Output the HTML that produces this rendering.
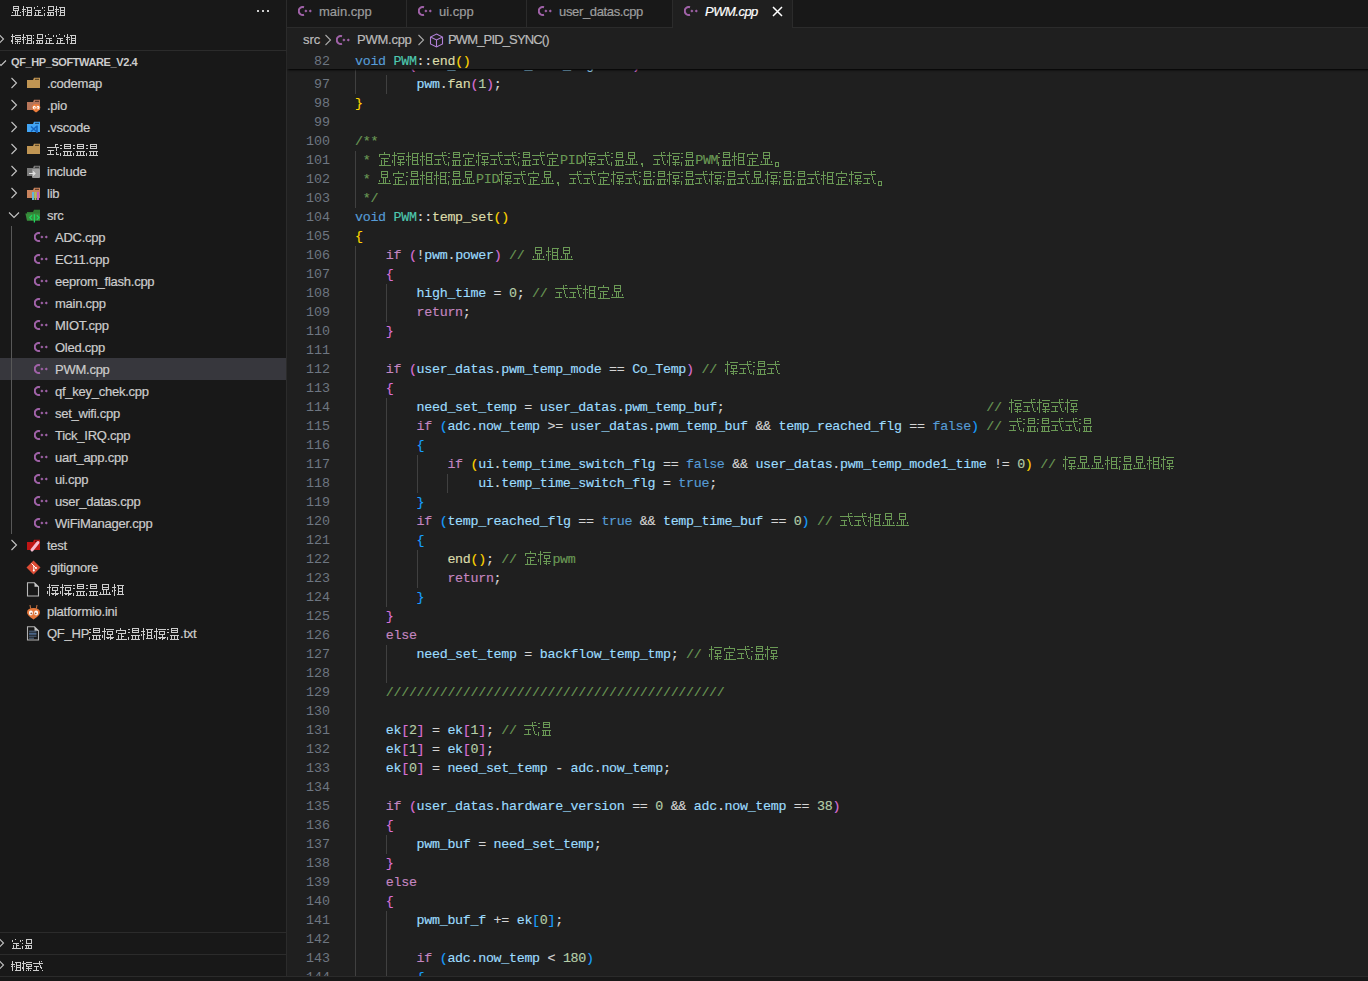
<!DOCTYPE html>
<html><head><meta charset="utf-8"><style>
html,body{margin:0;padding:0}
body{width:1368px;height:981px;overflow:hidden;background:#1f1f1f;position:relative;font-family:"Liberation Sans",sans-serif;}
.ic{position:absolute;display:block}
#side{position:absolute;left:0;top:0;width:286px;height:976px;background:#181818;overflow:hidden}
#sideborder{position:absolute;left:286px;top:0;width:1px;height:976px;background:#2b2b2b}
.stitle{position:absolute;left:11px;top:0;height:22px;line-height:22px;font-size:11px;color:#cccccc;white-space:nowrap}
.dots{position:absolute;left:257px;top:10px;width:14px;height:2px}
.dots i{position:absolute;top:0;width:2px;height:2px;background:#cccccc}
.dots i:nth-child(1){left:0}.dots i:nth-child(2){left:5px}.dots i:nth-child(3){left:10px}
.shead{position:absolute;left:11px;height:22px;line-height:22px;font-size:11px;font-weight:bold;color:#cccccc;white-space:nowrap}
.hline{position:absolute;left:0;width:286px;height:1px;background:#2b2b2b}
.tguide{position:absolute;left:11px;top:226px;width:1px;height:308px;background:#585858}
.sel{position:absolute;left:0;width:286px;height:22px;background:#37373d}
.ti{position:absolute;height:22px;line-height:22px;font-size:13px;color:#cccccc;white-space:pre;letter-spacing:-0.25px}
#tabs{position:absolute;left:287px;top:0;width:1081px;height:27px;background:#181818}
.tab{position:absolute;top:0;height:27px;background:#181818}
.tab.act{background:#1f1f1f;height:28px}
.tsep{position:absolute;top:0;width:1px;height:27px;background:#2b2b2b}
.tt{position:absolute;top:0;height:24px;line-height:24px;font-size:13px;color:#9d9d9d;white-space:pre}
.tt.tact{color:#ffffff;font-style:italic}
#tabs .ic{}
#tabline{position:absolute;left:287px;top:27px;width:1081px;height:1px;background:#2b2b2b}
#crumb{position:absolute;left:0;top:0}
.bc{position:absolute;top:29px;height:22px;line-height:22px;font-size:13px;color:#bbbbbb;white-space:pre}
#code{position:absolute;left:0;top:0;width:1368px;height:976px;overflow:hidden;clip-path:inset(50px 0 0 287px)}
.ln{position:absolute;left:287px;width:43px;text-align:right;height:19px;line-height:19px;font-family:"Liberation Mono",monospace;font-size:13.333px;color:#6e7681}
.cl{position:absolute;left:355px;height:19px;line-height:19px;font-family:"Liberation Mono",monospace;font-size:13.333px;letter-spacing:-0.3px;color:#d4d4d4;white-space:pre;-webkit-text-stroke:0.15px currentColor}
.ig{position:absolute;width:1px;background:#404040}
#sticky{position:absolute;left:287px;top:50px;width:1100px;height:19px;background:#1f1f1f;box-shadow:0 2px 2px -1px #000}
#sticky .ln{left:0}
#sticky .cl{left:68px}
#panel{position:absolute;left:0;top:976px;width:1368px;height:5px;background:#181818;border-top:1px solid #2b2b2b;box-sizing:border-box}
.k{color:#569cd6}.c{color:#c586c0}.t{color:#4ec9b0}.f{color:#dcdcaa}.v{color:#9cdcfe}.e{color:#9cdcfe}.n{color:#b5cea8}.m{color:#6a9955}.o{color:#d4d4d4}
.b1{color:#ffd700}.b2{color:#da70d6}.b3{color:#179fff}


.bold .h11{filter:drop-shadow(0.7px 0 0 #cccccc)}
.ti,.tt,.bc,.stitle{-webkit-text-stroke:0.2px currentColor}

.c14{display:inline-block;width:14px;height:19px;vertical-align:top;background-repeat:no-repeat}
.c14.g0{background:linear-gradient(currentColor,currentColor) 2px 1px/1px 14px no-repeat,linear-gradient(currentColor,currentColor) 0px 5px/5px 1px no-repeat,linear-gradient(currentColor,currentColor) 0px 8px/1px 2px no-repeat,linear-gradient(currentColor,currentColor) 4px 8px/1px 1px no-repeat,linear-gradient(currentColor,currentColor) 6px 2px/7px 1px no-repeat,linear-gradient(currentColor,currentColor) 6px 6px/6px 1px no-repeat,linear-gradient(currentColor,currentColor) 6px 9px/6px 1px no-repeat,linear-gradient(currentColor,currentColor) 6px 13px/7px 1px no-repeat,linear-gradient(currentColor,currentColor) 6px 2px/1px 12px no-repeat,linear-gradient(currentColor,currentColor) 11px 2px/1px 12px no-repeat}
.c14.g1{background:linear-gradient(currentColor,currentColor) 0px 2px/2px 1px no-repeat,linear-gradient(currentColor,currentColor) 0px 6px/2px 1px no-repeat,linear-gradient(currentColor,currentColor) 0px 11px/1px 4px no-repeat,linear-gradient(currentColor,currentColor) 5px 1px/7px 1px no-repeat,linear-gradient(currentColor,currentColor) 5px 3px/7px 1px no-repeat,linear-gradient(currentColor,currentColor) 5px 6px/7px 1px no-repeat,linear-gradient(currentColor,currentColor) 5px 1px/1px 6px no-repeat,linear-gradient(currentColor,currentColor) 11px 1px/1px 6px no-repeat,linear-gradient(currentColor,currentColor) 4px 9px/9px 1px no-repeat,linear-gradient(currentColor,currentColor) 4px 14px/9px 1px no-repeat,linear-gradient(currentColor,currentColor) 5px 9px/1px 6px no-repeat,linear-gradient(currentColor,currentColor) 7px 9px/1px 6px no-repeat,linear-gradient(currentColor,currentColor) 11px 9px/1px 6px no-repeat}
.c14.g2{background:linear-gradient(currentColor,currentColor) 2px 1px/1px 14px no-repeat,linear-gradient(currentColor,currentColor) 0px 4px/5px 1px no-repeat,linear-gradient(currentColor,currentColor) 0px 9px/1px 3px no-repeat,linear-gradient(currentColor,currentColor) 5px 2px/8px 1px no-repeat,linear-gradient(currentColor,currentColor) 6px 5px/6px 1px no-repeat,linear-gradient(currentColor,currentColor) 6px 8px/6px 1px no-repeat,linear-gradient(currentColor,currentColor) 5px 11px/8px 1px no-repeat,linear-gradient(currentColor,currentColor) 6px 5px/1px 4px no-repeat,linear-gradient(currentColor,currentColor) 11px 5px/1px 4px no-repeat,linear-gradient(currentColor,currentColor) 8px 8px/1px 7px no-repeat,linear-gradient(currentColor,currentColor) 6px 13px/2px 1px no-repeat,linear-gradient(currentColor,currentColor) 10px 13px/2px 1px no-repeat}
.c14.g3{background:linear-gradient(currentColor,currentColor) 6px 1px/1px 2px no-repeat,linear-gradient(currentColor,currentColor) 1px 3px/11px 1px no-repeat,linear-gradient(currentColor,currentColor) 1px 3px/1px 3px no-repeat,linear-gradient(currentColor,currentColor) 11px 3px/1px 3px no-repeat,linear-gradient(currentColor,currentColor) 3px 7px/8px 1px no-repeat,linear-gradient(currentColor,currentColor) 6px 7px/1px 7px no-repeat,linear-gradient(currentColor,currentColor) 6px 10px/4px 1px no-repeat,linear-gradient(currentColor,currentColor) 1px 14px/12px 1px no-repeat,linear-gradient(currentColor,currentColor) 3px 9px/1px 5px no-repeat}
.c14.g4{background:linear-gradient(currentColor,currentColor) 3px 1px/7px 1px no-repeat,linear-gradient(currentColor,currentColor) 3px 4px/7px 1px no-repeat,linear-gradient(currentColor,currentColor) 3px 7px/7px 1px no-repeat,linear-gradient(currentColor,currentColor) 3px 1px/1px 7px no-repeat,linear-gradient(currentColor,currentColor) 9px 1px/1px 7px no-repeat,linear-gradient(currentColor,currentColor) 5px 8px/1px 5px no-repeat,linear-gradient(currentColor,currentColor) 7px 8px/1px 5px no-repeat,linear-gradient(currentColor,currentColor) 0px 13px/13px 1px no-repeat,linear-gradient(currentColor,currentColor) 1px 10px/1px 2px no-repeat,linear-gradient(currentColor,currentColor) 11px 10px/1px 2px no-repeat}
.c14.g5{background:linear-gradient(currentColor,currentColor) 0px 4px/13px 1px no-repeat,linear-gradient(currentColor,currentColor) 1px 8px/6px 1px no-repeat,linear-gradient(currentColor,currentColor) 4px 8px/1px 6px no-repeat,linear-gradient(currentColor,currentColor) 0px 13px/7px 1px no-repeat,linear-gradient(currentColor,currentColor) 8px 1px/1px 5px no-repeat,linear-gradient(currentColor,currentColor) 9px 6px/1px 4px no-repeat,linear-gradient(currentColor,currentColor) 10px 10px/1px 3px no-repeat,linear-gradient(currentColor,currentColor) 11px 13px/2px 1px no-repeat,linear-gradient(currentColor,currentColor) 10px 1px/2px 1px no-repeat}
.c14.g6{background:linear-gradient(currentColor,currentColor) 2px 12px/2px 2px no-repeat,linear-gradient(currentColor,currentColor) 3px 14px/1px 2px no-repeat}
.c14.g7{background:linear-gradient(currentColor,currentColor) 1px 11px/4px 1px no-repeat,linear-gradient(currentColor,currentColor) 1px 15px/4px 1px no-repeat,linear-gradient(currentColor,currentColor) 1px 11px/1px 5px no-repeat,linear-gradient(currentColor,currentColor) 4px 11px/1px 5px no-repeat}
.s13{display:inline-block;width:13px;height:22px;vertical-align:top;background-repeat:no-repeat}
.s13.g0{background:linear-gradient(currentColor,currentColor) 2px 5px/1px 12px no-repeat,linear-gradient(currentColor,currentColor) 0px 8px/4px 1px no-repeat,linear-gradient(currentColor,currentColor) 0px 11px/1px 2px no-repeat,linear-gradient(currentColor,currentColor) 3px 11px/1px 1px no-repeat,linear-gradient(currentColor,currentColor) 5px 6px/7px 1px no-repeat,linear-gradient(currentColor,currentColor) 6px 9px/5px 1px no-repeat,linear-gradient(currentColor,currentColor) 6px 12px/5px 1px no-repeat,linear-gradient(currentColor,currentColor) 5px 15px/7px 1px no-repeat,linear-gradient(currentColor,currentColor) 6px 6px/1px 10px no-repeat,linear-gradient(currentColor,currentColor) 10px 6px/1px 10px no-repeat}
.s13.g1{background:linear-gradient(currentColor,currentColor) 0px 6px/2px 1px no-repeat,linear-gradient(currentColor,currentColor) 0px 9px/2px 1px no-repeat,linear-gradient(currentColor,currentColor) 0px 14px/1px 3px no-repeat,linear-gradient(currentColor,currentColor) 4px 5px/7px 1px no-repeat,linear-gradient(currentColor,currentColor) 4px 7px/7px 1px no-repeat,linear-gradient(currentColor,currentColor) 4px 9px/7px 1px no-repeat,linear-gradient(currentColor,currentColor) 4px 5px/1px 5px no-repeat,linear-gradient(currentColor,currentColor) 10px 5px/1px 5px no-repeat,linear-gradient(currentColor,currentColor) 3px 12px/9px 1px no-repeat,linear-gradient(currentColor,currentColor) 3px 16px/9px 1px no-repeat,linear-gradient(currentColor,currentColor) 4px 12px/1px 5px no-repeat,linear-gradient(currentColor,currentColor) 7px 12px/1px 5px no-repeat,linear-gradient(currentColor,currentColor) 10px 12px/1px 5px no-repeat}
.s13.g2{background:linear-gradient(currentColor,currentColor) 2px 5px/1px 12px no-repeat,linear-gradient(currentColor,currentColor) 0px 8px/4px 1px no-repeat,linear-gradient(currentColor,currentColor) 0px 12px/1px 3px no-repeat,linear-gradient(currentColor,currentColor) 4px 6px/8px 1px no-repeat,linear-gradient(currentColor,currentColor) 5px 8px/6px 1px no-repeat,linear-gradient(currentColor,currentColor) 5px 11px/6px 1px no-repeat,linear-gradient(currentColor,currentColor) 4px 14px/8px 1px no-repeat,linear-gradient(currentColor,currentColor) 5px 8px/1px 3px no-repeat,linear-gradient(currentColor,currentColor) 10px 8px/1px 3px no-repeat,linear-gradient(currentColor,currentColor) 8px 11px/1px 6px no-repeat,linear-gradient(currentColor,currentColor) 5px 15px/2px 1px no-repeat,linear-gradient(currentColor,currentColor) 9px 15px/2px 1px no-repeat}
.s13.g3{background:linear-gradient(currentColor,currentColor) 5px 5px/1px 2px no-repeat,linear-gradient(currentColor,currentColor) 1px 7px/10px 1px no-repeat,linear-gradient(currentColor,currentColor) 1px 7px/1px 3px no-repeat,linear-gradient(currentColor,currentColor) 10px 7px/1px 3px no-repeat,linear-gradient(currentColor,currentColor) 3px 10px/8px 1px no-repeat,linear-gradient(currentColor,currentColor) 6px 10px/1px 6px no-repeat,linear-gradient(currentColor,currentColor) 6px 13px/3px 1px no-repeat,linear-gradient(currentColor,currentColor) 1px 16px/11px 1px no-repeat,linear-gradient(currentColor,currentColor) 3px 12px/1px 4px no-repeat}
.s13.g4{background:linear-gradient(currentColor,currentColor) 3px 5px/7px 1px no-repeat,linear-gradient(currentColor,currentColor) 3px 8px/7px 1px no-repeat,linear-gradient(currentColor,currentColor) 3px 10px/7px 1px no-repeat,linear-gradient(currentColor,currentColor) 3px 5px/1px 6px no-repeat,linear-gradient(currentColor,currentColor) 9px 5px/1px 6px no-repeat,linear-gradient(currentColor,currentColor) 4px 11px/1px 4px no-repeat,linear-gradient(currentColor,currentColor) 7px 11px/1px 4px no-repeat,linear-gradient(currentColor,currentColor) 0px 15px/12px 1px no-repeat,linear-gradient(currentColor,currentColor) 1px 13px/1px 2px no-repeat,linear-gradient(currentColor,currentColor) 10px 13px/1px 2px no-repeat}
.s13.g5{background:linear-gradient(currentColor,currentColor) 0px 8px/12px 1px no-repeat,linear-gradient(currentColor,currentColor) 1px 11px/6px 1px no-repeat,linear-gradient(currentColor,currentColor) 3px 11px/1px 5px no-repeat,linear-gradient(currentColor,currentColor) 0px 15px/7px 1px no-repeat,linear-gradient(currentColor,currentColor) 8px 5px/1px 4px no-repeat,linear-gradient(currentColor,currentColor) 9px 9px/1px 3px no-repeat,linear-gradient(currentColor,currentColor) 9px 13px/1px 3px no-repeat,linear-gradient(currentColor,currentColor) 10px 15px/2px 1px no-repeat,linear-gradient(currentColor,currentColor) 9px 5px/2px 1px no-repeat}
.s13.g6{background:linear-gradient(currentColor,currentColor) 2px 14px/2px 2px no-repeat,linear-gradient(currentColor,currentColor) 3px 16px/1px 2px no-repeat}
.s13.g7{background:linear-gradient(currentColor,currentColor) 1px 14px/3px 1px no-repeat,linear-gradient(currentColor,currentColor) 1px 17px/3px 1px no-repeat,linear-gradient(currentColor,currentColor) 1px 14px/1px 4px no-repeat,linear-gradient(currentColor,currentColor) 3px 14px/1px 4px no-repeat}
.h11{display:inline-block;width:11px;height:22px;vertical-align:top;background-repeat:no-repeat}
.h11.g0{background:linear-gradient(currentColor,currentColor) 1px 6px/1px 10px no-repeat,linear-gradient(currentColor,currentColor) 0px 9px/4px 1px no-repeat,linear-gradient(currentColor,currentColor) 0px 11px/1px 1px no-repeat,linear-gradient(currentColor,currentColor) 3px 11px/1px 1px no-repeat,linear-gradient(currentColor,currentColor) 4px 7px/6px 1px no-repeat,linear-gradient(currentColor,currentColor) 5px 10px/4px 1px no-repeat,linear-gradient(currentColor,currentColor) 5px 12px/4px 1px no-repeat,linear-gradient(currentColor,currentColor) 4px 15px/6px 1px no-repeat,linear-gradient(currentColor,currentColor) 5px 7px/1px 9px no-repeat,linear-gradient(currentColor,currentColor) 9px 7px/1px 9px no-repeat}
.h11.g1{background:linear-gradient(currentColor,currentColor) 0px 7px/1px 1px no-repeat,linear-gradient(currentColor,currentColor) 0px 10px/1px 1px no-repeat,linear-gradient(currentColor,currentColor) 0px 13px/1px 3px no-repeat,linear-gradient(currentColor,currentColor) 4px 6px/6px 1px no-repeat,linear-gradient(currentColor,currentColor) 4px 10px/6px 1px no-repeat,linear-gradient(currentColor,currentColor) 4px 6px/1px 4px no-repeat,linear-gradient(currentColor,currentColor) 9px 6px/1px 4px no-repeat,linear-gradient(currentColor,currentColor) 3px 12px/7px 1px no-repeat,linear-gradient(currentColor,currentColor) 3px 15px/7px 1px no-repeat,linear-gradient(currentColor,currentColor) 4px 12px/1px 4px no-repeat,linear-gradient(currentColor,currentColor) 6px 12px/1px 4px no-repeat,linear-gradient(currentColor,currentColor) 9px 12px/1px 4px no-repeat}
.h11.g2{background:linear-gradient(currentColor,currentColor) 1px 6px/1px 10px no-repeat,linear-gradient(currentColor,currentColor) 0px 8px/4px 1px no-repeat,linear-gradient(currentColor,currentColor) 0px 12px/1px 2px no-repeat,linear-gradient(currentColor,currentColor) 4px 7px/6px 1px no-repeat,linear-gradient(currentColor,currentColor) 4px 9px/5px 1px no-repeat,linear-gradient(currentColor,currentColor) 4px 11px/5px 1px no-repeat,linear-gradient(currentColor,currentColor) 4px 13px/6px 1px no-repeat,linear-gradient(currentColor,currentColor) 4px 9px/1px 3px no-repeat,linear-gradient(currentColor,currentColor) 9px 9px/1px 3px no-repeat,linear-gradient(currentColor,currentColor) 6px 11px/1px 5px no-repeat,linear-gradient(currentColor,currentColor) 4px 15px/1px 1px no-repeat,linear-gradient(currentColor,currentColor) 8px 15px/1px 1px no-repeat}
.h11.g3{background:linear-gradient(currentColor,currentColor) 4px 6px/1px 1px no-repeat,linear-gradient(currentColor,currentColor) 1px 7px/1px 2px no-repeat,linear-gradient(currentColor,currentColor) 9px 7px/1px 2px no-repeat,linear-gradient(currentColor,currentColor) 2px 10px/6px 1px no-repeat,linear-gradient(currentColor,currentColor) 5px 10px/1px 5px no-repeat,linear-gradient(currentColor,currentColor) 5px 12px/3px 1px no-repeat,linear-gradient(currentColor,currentColor) 1px 15px/9px 1px no-repeat,linear-gradient(currentColor,currentColor) 2px 12px/1px 4px no-repeat}
.h11.g4{background:linear-gradient(currentColor,currentColor) 2px 6px/6px 1px no-repeat,linear-gradient(currentColor,currentColor) 2px 8px/6px 1px no-repeat,linear-gradient(currentColor,currentColor) 2px 10px/6px 1px no-repeat,linear-gradient(currentColor,currentColor) 2px 6px/1px 5px no-repeat,linear-gradient(currentColor,currentColor) 7px 6px/1px 5px no-repeat,linear-gradient(currentColor,currentColor) 4px 11px/1px 4px no-repeat,linear-gradient(currentColor,currentColor) 6px 11px/1px 4px no-repeat,linear-gradient(currentColor,currentColor) 0px 15px/10px 1px no-repeat,linear-gradient(currentColor,currentColor) 1px 12px/1px 1px no-repeat,linear-gradient(currentColor,currentColor) 9px 12px/1px 1px no-repeat}
.h11.g5{background:linear-gradient(currentColor,currentColor) 0px 8px/10px 1px no-repeat,linear-gradient(currentColor,currentColor) 1px 11px/5px 1px no-repeat,linear-gradient(currentColor,currentColor) 3px 11px/1px 4px no-repeat,linear-gradient(currentColor,currentColor) 0px 15px/6px 1px no-repeat,linear-gradient(currentColor,currentColor) 6px 6px/1px 4px no-repeat,linear-gradient(currentColor,currentColor) 7px 10px/1px 3px no-repeat,linear-gradient(currentColor,currentColor) 8px 12px/1px 2px no-repeat,linear-gradient(currentColor,currentColor) 9px 15px/1px 1px no-repeat,linear-gradient(currentColor,currentColor) 8px 6px/1px 1px no-repeat}
.h11.g6{background:linear-gradient(currentColor,currentColor) 1px 14px/1px 1px no-repeat,linear-gradient(currentColor,currentColor) 2px 15px/1px 1px no-repeat}
.h11.g7{background:linear-gradient(currentColor,currentColor) 1px 13px/3px 1px no-repeat,linear-gradient(currentColor,currentColor) 1px 16px/3px 1px no-repeat,linear-gradient(currentColor,currentColor) 1px 13px/1px 4px no-repeat,linear-gradient(currentColor,currentColor) 3px 13px/1px 4px no-repeat}
</style></head><body>
<div id="side">
<div class="stitle"><span class="h11 g4"></span><span class="h11 g0"></span><span class="h11 g3"></span><span class="h11 g1"></span><span class="h11 g0"></span></div>
<div class="dots"><i></i><i></i><i></i></div>
<svg class="ic" style="left:-3px;top:33px" width="8" height="12" viewBox="0 0 8 12"><path d="M1.5 1 L6.5 6 L1.5 11" fill="none" stroke="#c5c5c5" stroke-width="1.1"/></svg>
<div class="shead bold" style="top:28px"><span class="h11 g2"></span><span class="h11 g0"></span><span class="h11 g1"></span><span class="h11 g3"></span><span class="h11 g3"></span><span class="h11 g0"></span></div>
<div class="hline" style="top:50px"></div>
<svg class="ic" style="left:-5px;top:59px" width="12" height="8" viewBox="0 0 12 8"><path d="M1 1.5 L6 6.5 L11 1.5" fill="none" stroke="#c5c5c5" stroke-width="1.1"/></svg>
<div class="shead" style="top:51px;letter-spacing:-0.4px">QF_HP_SOFTWARE_V2.4</div>
<svg class="ic" style="left:10px;top:77px" width="8" height="12" viewBox="0 0 8 12"><path d="M1.5 1 L6.5 6 L1.5 11" fill="none" stroke="#c5c5c5" stroke-width="1.1"/></svg><svg class="ic" style="left:26px;top:77px" width="15" height="14" viewBox="0 0 15 14"><path d="M1 3.1 H7 L8 0.8 H14 V11.1 H1 Z" fill="#c09553"/><rect x="9" y="1.8" width="4" height="1.1" fill="#000" opacity="0.55"/></svg><div class="ti" style="left:47px;top:73px">.codemap</div><svg class="ic" style="left:10px;top:99px" width="8" height="12" viewBox="0 0 8 12"><path d="M1.5 1 L6.5 6 L1.5 11" fill="none" stroke="#c5c5c5" stroke-width="1.1"/></svg><svg class="ic" style="left:26px;top:99px" width="15" height="14" viewBox="0 0 15 14"><path d="M1 3.1 H7 L8 0.8 H14 V11.1 H1 Z" fill="#b8765a"/><rect x="9" y="1.8" width="4" height="1.1" fill="#000" opacity="0.55"/><path d="M6 8.5 Q6 5 10 5 Q14.3 5 14.3 8.5 Q14.3 11 10 13.5 Q6 11 6 8.5Z" fill="#ee7d3b"/><ellipse cx="8.3" cy="8.6" rx="1.5" ry="1.8" fill="#fff"/><ellipse cx="12" cy="8.6" rx="1.5" ry="1.8" fill="#fff"/><circle cx="8.6" cy="8.9" r="0.6" fill="#ee7d3b"/><circle cx="11.7" cy="8.9" r="0.6" fill="#ee7d3b"/></svg><div class="ti" style="left:47px;top:95px">.pio</div><svg class="ic" style="left:10px;top:121px" width="8" height="12" viewBox="0 0 8 12"><path d="M1.5 1 L6.5 6 L1.5 11" fill="none" stroke="#c5c5c5" stroke-width="1.1"/></svg><svg class="ic" style="left:26px;top:121px" width="15" height="14" viewBox="0 0 15 14"><path d="M1 3.1 H7 L8 0.8 H14 V11.1 H1 Z" fill="#42a5f5"/><rect x="9" y="1.8" width="4" height="1.1" fill="#000" opacity="0.55"/><path d="M5 5.5 L11 11 M5 10.5 L11 5 M11 4.5 V12" stroke="#1565c0" stroke-width="1.6" fill="none"/></svg><div class="ti" style="left:47px;top:117px">.vscode</div><svg class="ic" style="left:10px;top:143px" width="8" height="12" viewBox="0 0 8 12"><path d="M1.5 1 L6.5 6 L1.5 11" fill="none" stroke="#c5c5c5" stroke-width="1.1"/></svg><svg class="ic" style="left:26px;top:143px" width="15" height="14" viewBox="0 0 15 14"><path d="M1 3.1 H7 L8 0.8 H14 V11.1 H1 Z" fill="#c09553"/><rect x="9" y="1.8" width="4" height="1.1" fill="#000" opacity="0.55"/></svg><div class="ti" style="left:47px;top:139px"><span class="s13 g5"></span><span class="s13 g1"></span><span class="s13 g1"></span><span class="s13 g1"></span></div><svg class="ic" style="left:10px;top:165px" width="8" height="12" viewBox="0 0 8 12"><path d="M1.5 1 L6.5 6 L1.5 11" fill="none" stroke="#c5c5c5" stroke-width="1.1"/></svg><svg class="ic" style="left:26px;top:165px" width="15" height="14" viewBox="0 0 15 14"><path d="M1 3.1 H7 L8 0.8 H14 V11.1 H1 Z" fill="#7a7a7a"/><rect x="9" y="1.8" width="4" height="1.1" fill="#000" opacity="0.55"/><rect x="6" y="4" width="8" height="9" rx="1" fill="#9e9e9e"/><path d="M3 8.5h6M7 6.5l2 2-2 2" stroke="#e0e0e0" stroke-width="1.2" fill="none"/></svg><div class="ti" style="left:47px;top:161px">include</div><svg class="ic" style="left:10px;top:187px" width="8" height="12" viewBox="0 0 8 12"><path d="M1.5 1 L6.5 6 L1.5 11" fill="none" stroke="#c5c5c5" stroke-width="1.1"/></svg><svg class="ic" style="left:26px;top:187px" width="15" height="14" viewBox="0 0 15 14"><path d="M1 3.1 H7 L8 0.8 H14 V11.1 H1 Z" fill="#c8825c"/><rect x="9" y="1.8" width="4" height="1.1" fill="#000" opacity="0.55"/><rect x="6" y="5" width="2" height="8" fill="#62b4dc"/><rect x="8.5" y="5" width="2" height="8" fill="#a8c060"/><rect x="11" y="5" width="2" height="8" fill="#c060c8"/></svg><div class="ti" style="left:47px;top:183px">lib</div><svg class="ic" style="left:8px;top:211px" width="12" height="8" viewBox="0 0 12 8"><path d="M1 1.5 L6 6.5 L11 1.5" fill="none" stroke="#c5c5c5" stroke-width="1.1"/></svg><svg class="ic" style="left:25px;top:209px" width="16" height="15" viewBox="-1 0 16 15"><path d="M1 3.1 H7 L8 0.8 H14 V11.1 H1 Z" fill="#2e7d32"/><path d="M-0.6 4.4 H14 V11.7 H1 Z" fill="#388e3c"/><path d="M6 6.3 L3.8 8.6 L6 10.9 M10.8 6.3 L13 8.6 L10.8 10.9 M8.4 5.2 V13.6" stroke="#1ed760" stroke-width="1.3" fill="none"/></svg><div class="ti" style="left:47px;top:205px">src</div><svg class="ic" style="left:34px;top:232px" width="15" height="11" viewBox="0 0 15 11"><path d="M6.0 1.2 A4 4 0 1 0 6.0 8.8" fill="none" stroke="#a062a8" stroke-width="2"/><path d="M7.9 3.4 L9.5 5 L7.9 6.6 L6.3 5Z M12.3 3.4 L13.9 5 L12.3 6.6 L10.7 5Z" fill="#a062a8"/></svg><div class="ti" style="left:55px;top:227px">ADC.cpp</div><svg class="ic" style="left:34px;top:254px" width="15" height="11" viewBox="0 0 15 11"><path d="M6.0 1.2 A4 4 0 1 0 6.0 8.8" fill="none" stroke="#a062a8" stroke-width="2"/><path d="M7.9 3.4 L9.5 5 L7.9 6.6 L6.3 5Z M12.3 3.4 L13.9 5 L12.3 6.6 L10.7 5Z" fill="#a062a8"/></svg><div class="ti" style="left:55px;top:249px">EC11.cpp</div><svg class="ic" style="left:34px;top:276px" width="15" height="11" viewBox="0 0 15 11"><path d="M6.0 1.2 A4 4 0 1 0 6.0 8.8" fill="none" stroke="#a062a8" stroke-width="2"/><path d="M7.9 3.4 L9.5 5 L7.9 6.6 L6.3 5Z M12.3 3.4 L13.9 5 L12.3 6.6 L10.7 5Z" fill="#a062a8"/></svg><div class="ti" style="left:55px;top:271px">eeprom_flash.cpp</div><svg class="ic" style="left:34px;top:298px" width="15" height="11" viewBox="0 0 15 11"><path d="M6.0 1.2 A4 4 0 1 0 6.0 8.8" fill="none" stroke="#a062a8" stroke-width="2"/><path d="M7.9 3.4 L9.5 5 L7.9 6.6 L6.3 5Z M12.3 3.4 L13.9 5 L12.3 6.6 L10.7 5Z" fill="#a062a8"/></svg><div class="ti" style="left:55px;top:293px">main.cpp</div><svg class="ic" style="left:34px;top:320px" width="15" height="11" viewBox="0 0 15 11"><path d="M6.0 1.2 A4 4 0 1 0 6.0 8.8" fill="none" stroke="#a062a8" stroke-width="2"/><path d="M7.9 3.4 L9.5 5 L7.9 6.6 L6.3 5Z M12.3 3.4 L13.9 5 L12.3 6.6 L10.7 5Z" fill="#a062a8"/></svg><div class="ti" style="left:55px;top:315px">MIOT.cpp</div><svg class="ic" style="left:34px;top:342px" width="15" height="11" viewBox="0 0 15 11"><path d="M6.0 1.2 A4 4 0 1 0 6.0 8.8" fill="none" stroke="#a062a8" stroke-width="2"/><path d="M7.9 3.4 L9.5 5 L7.9 6.6 L6.3 5Z M12.3 3.4 L13.9 5 L12.3 6.6 L10.7 5Z" fill="#a062a8"/></svg><div class="ti" style="left:55px;top:337px">Oled.cpp</div><div class="sel" style="top:358px"></div><svg class="ic" style="left:34px;top:364px" width="15" height="11" viewBox="0 0 15 11"><path d="M6.0 1.2 A4 4 0 1 0 6.0 8.8" fill="none" stroke="#a062a8" stroke-width="2"/><path d="M7.9 3.4 L9.5 5 L7.9 6.6 L6.3 5Z M12.3 3.4 L13.9 5 L12.3 6.6 L10.7 5Z" fill="#a062a8"/></svg><div class="ti" style="left:55px;top:359px">PWM.cpp</div><svg class="ic" style="left:34px;top:386px" width="15" height="11" viewBox="0 0 15 11"><path d="M6.0 1.2 A4 4 0 1 0 6.0 8.8" fill="none" stroke="#a062a8" stroke-width="2"/><path d="M7.9 3.4 L9.5 5 L7.9 6.6 L6.3 5Z M12.3 3.4 L13.9 5 L12.3 6.6 L10.7 5Z" fill="#a062a8"/></svg><div class="ti" style="left:55px;top:381px">qf_key_chek.cpp</div><svg class="ic" style="left:34px;top:408px" width="15" height="11" viewBox="0 0 15 11"><path d="M6.0 1.2 A4 4 0 1 0 6.0 8.8" fill="none" stroke="#a062a8" stroke-width="2"/><path d="M7.9 3.4 L9.5 5 L7.9 6.6 L6.3 5Z M12.3 3.4 L13.9 5 L12.3 6.6 L10.7 5Z" fill="#a062a8"/></svg><div class="ti" style="left:55px;top:403px">set_wifi.cpp</div><svg class="ic" style="left:34px;top:430px" width="15" height="11" viewBox="0 0 15 11"><path d="M6.0 1.2 A4 4 0 1 0 6.0 8.8" fill="none" stroke="#a062a8" stroke-width="2"/><path d="M7.9 3.4 L9.5 5 L7.9 6.6 L6.3 5Z M12.3 3.4 L13.9 5 L12.3 6.6 L10.7 5Z" fill="#a062a8"/></svg><div class="ti" style="left:55px;top:425px">Tick_IRQ.cpp</div><svg class="ic" style="left:34px;top:452px" width="15" height="11" viewBox="0 0 15 11"><path d="M6.0 1.2 A4 4 0 1 0 6.0 8.8" fill="none" stroke="#a062a8" stroke-width="2"/><path d="M7.9 3.4 L9.5 5 L7.9 6.6 L6.3 5Z M12.3 3.4 L13.9 5 L12.3 6.6 L10.7 5Z" fill="#a062a8"/></svg><div class="ti" style="left:55px;top:447px">uart_app.cpp</div><svg class="ic" style="left:34px;top:474px" width="15" height="11" viewBox="0 0 15 11"><path d="M6.0 1.2 A4 4 0 1 0 6.0 8.8" fill="none" stroke="#a062a8" stroke-width="2"/><path d="M7.9 3.4 L9.5 5 L7.9 6.6 L6.3 5Z M12.3 3.4 L13.9 5 L12.3 6.6 L10.7 5Z" fill="#a062a8"/></svg><div class="ti" style="left:55px;top:469px">ui.cpp</div><svg class="ic" style="left:34px;top:496px" width="15" height="11" viewBox="0 0 15 11"><path d="M6.0 1.2 A4 4 0 1 0 6.0 8.8" fill="none" stroke="#a062a8" stroke-width="2"/><path d="M7.9 3.4 L9.5 5 L7.9 6.6 L6.3 5Z M12.3 3.4 L13.9 5 L12.3 6.6 L10.7 5Z" fill="#a062a8"/></svg><div class="ti" style="left:55px;top:491px">user_datas.cpp</div><svg class="ic" style="left:34px;top:518px" width="15" height="11" viewBox="0 0 15 11"><path d="M6.0 1.2 A4 4 0 1 0 6.0 8.8" fill="none" stroke="#a062a8" stroke-width="2"/><path d="M7.9 3.4 L9.5 5 L7.9 6.6 L6.3 5Z M12.3 3.4 L13.9 5 L12.3 6.6 L10.7 5Z" fill="#a062a8"/></svg><div class="ti" style="left:55px;top:513px">WiFiManager.cpp</div><svg class="ic" style="left:10px;top:539px" width="8" height="12" viewBox="0 0 8 12"><path d="M1.5 1 L6.5 6 L1.5 11" fill="none" stroke="#c5c5c5" stroke-width="1.1"/></svg><svg class="ic" style="left:26px;top:539px" width="15" height="14" viewBox="0 0 15 14"><path d="M1 3.1 H7 L8 0.8 H14 V11.1 H1 Z" fill="#bf1515"/><rect x="9" y="1.8" width="4" height="1.1" fill="#000" opacity="0.55"/><path d="M12 3.5 L6 11" stroke="#f8bbd0" stroke-width="3" stroke-linecap="round"/></svg><div class="ti" style="left:47px;top:535px">test</div><svg class="ic" style="left:26px;top:560px" width="15" height="15" viewBox="0 0 15 15"><path d="M7.5 0.5 L14.5 7.5 L7.5 14.5 L0.5 7.5 Z" fill="#dd4c35"/><path d="M5.5 3.5 L10 8 M7.8 5.8 V10.5" stroke="#fff" stroke-width="1" fill="none"/><circle cx="7.8" cy="10.5" r="1" fill="#fff"/><circle cx="10" cy="8" r="1" fill="#fff"/></svg><div class="ti" style="left:47px;top:557px">.gitignore</div><svg class="ic" style="left:26px;top:582px" width="14" height="15" viewBox="0 0 14 15"><path d="M1.5 0.8 H8.5 L12.5 4.8 V14 H1.5 Z" fill="none" stroke="#b8b8b8" stroke-width="1.1"/><path d="M8.5 0.8 L12.5 4.8 H8.5Z" fill="#c8c8c8"/></svg><div class="ti" style="left:47px;top:579px"><span class="s13 g2"></span><span class="s13 g2"></span><span class="s13 g1"></span><span class="s13 g1"></span><span class="s13 g4"></span><span class="s13 g0"></span></div><svg class="ic" style="left:26px;top:604px" width="15" height="16" viewBox="0 0 15 16"><path d="M4.6 4.5 L4 1 M10.4 4.5 L11 1" stroke="#c87848" stroke-width="1"/><path d="M7.5 15.6 Q1 11.5 1 8.6 Q1 4 7.5 4 Q14 4 14 8.6 Q14 11.5 7.5 15.6Z" fill="#e5773a"/><ellipse cx="4.9" cy="9" rx="2" ry="2.4" fill="#fff"/><ellipse cx="10.1" cy="9" rx="2" ry="2.4" fill="#fff"/><circle cx="5.3" cy="9.4" r="0.9" fill="#a05a35"/><circle cx="9.7" cy="9.4" r="0.9" fill="#a05a35"/></svg><div class="ti" style="left:47px;top:601px">platformio.ini</div><svg class="ic" style="left:26px;top:626px" width="14" height="15" viewBox="0 0 14 15"><path d="M1.5 0.8 H8.5 L12.5 4.8 V14 H1.5 Z" fill="none" stroke="#b0b0b0" stroke-width="1.1"/><path d="M8.5 0.8 L12.5 4.8 H8.5Z" fill="#c8c8c8"/><path d="M3 5.2h7.5M3 10.2h7.5M3 12.2h5" stroke="#5a7494" stroke-width="0.9"/><rect x="3" y="6.6" width="7.5" height="2.2" fill="#4a6486"/></svg><div class="ti" style="left:47px;top:623px">QF_HP<span class="s13 g1"></span><span class="s13 g2"></span><span class="s13 g3"></span><span class="s13 g1"></span><span class="s13 g0"></span><span class="s13 g2"></span><span class="s13 g1"></span>.txt</div>
<div class="tguide"></div>
<div class="hline" style="top:932px"></div>
<svg class="ic" style="left:-3px;top:937px" width="8" height="12" viewBox="0 0 8 12"><path d="M1.5 1 L6.5 6 L1.5 11" fill="none" stroke="#c5c5c5" stroke-width="1.1"/></svg>
<div class="shead bold" style="top:933px"><span class="h11 g3"></span><span class="h11 g1"></span></div>
<div class="hline" style="top:954px"></div>
<svg class="ic" style="left:-3px;top:959px" width="8" height="12" viewBox="0 0 8 12"><path d="M1.5 1 L6.5 6 L1.5 11" fill="none" stroke="#c5c5c5" stroke-width="1.1"/></svg>
<div class="shead bold" style="top:955px"><span class="h11 g0"></span><span class="h11 g2"></span><span class="h11 g5"></span></div>
</div>
<div id="sideborder"></div>
<div id="tabs"></div>
<div id="tabline"></div><div class="tab" style="left:287px;width:119px"></div><div class="tsep" style="left:406px"></div><svg class="ic" style="left:298px;top:6px" width="15" height="11" viewBox="0 0 15 11"><path d="M6.0 1.2 A4 4 0 1 0 6.0 8.8" fill="none" stroke="#a062a8" stroke-width="2"/><path d="M7.9 3.4 L9.5 5 L7.9 6.6 L6.3 5Z M12.3 3.4 L13.9 5 L12.3 6.6 L10.7 5Z" fill="#a062a8"/></svg><div class="tt" style="left:319px;letter-spacing:0px">main.cpp</div><div class="tab" style="left:407px;width:119px"></div><div class="tsep" style="left:526px"></div><svg class="ic" style="left:418px;top:6px" width="15" height="11" viewBox="0 0 15 11"><path d="M6.0 1.2 A4 4 0 1 0 6.0 8.8" fill="none" stroke="#a062a8" stroke-width="2"/><path d="M7.9 3.4 L9.5 5 L7.9 6.6 L6.3 5Z M12.3 3.4 L13.9 5 L12.3 6.6 L10.7 5Z" fill="#a062a8"/></svg><div class="tt" style="left:439px;letter-spacing:0px">ui.cpp</div><div class="tab" style="left:527px;width:145px"></div><div class="tsep" style="left:672px"></div><svg class="ic" style="left:538px;top:6px" width="15" height="11" viewBox="0 0 15 11"><path d="M6.0 1.2 A4 4 0 1 0 6.0 8.8" fill="none" stroke="#a062a8" stroke-width="2"/><path d="M7.9 3.4 L9.5 5 L7.9 6.6 L6.3 5Z M12.3 3.4 L13.9 5 L12.3 6.6 L10.7 5Z" fill="#a062a8"/></svg><div class="tt" style="left:559px;letter-spacing:-0.35px">user_datas.cpp</div><div class="tab act" style="left:673px;width:119px"></div><div class="tsep" style="left:792px"></div><svg class="ic" style="left:684px;top:6px" width="15" height="11" viewBox="0 0 15 11"><path d="M6.0 1.2 A4 4 0 1 0 6.0 8.8" fill="none" stroke="#a062a8" stroke-width="2"/><path d="M7.9 3.4 L9.5 5 L7.9 6.6 L6.3 5Z M12.3 3.4 L13.9 5 L12.3 6.6 L10.7 5Z" fill="#a062a8"/></svg><div class="tt tact" style="left:705px;letter-spacing:-0.5px">PWM.cpp</div><svg class="ic" style="left:772px;top:6px" width="11" height="11" viewBox="0 0 11 11"><path d="M1 1 L10 10 M10 1 L1 10" stroke="#ffffff" stroke-width="1.5"/></svg>
<div id="crumb">
<div class="bc" style="left:303px">src</div>
<svg class="ic" style="left:324px;top:34px" width="8" height="12" viewBox="0 0 8 12"><path d="M1.5 1 L6.5 6 L1.5 11" fill="none" stroke="#a9a9a9" stroke-width="1.1"/></svg>
<svg class="ic" style="left:336px;top:35px" width="15" height="11" viewBox="0 0 15 11"><path d="M6.0 1.2 A4 4 0 1 0 6.0 8.8" fill="none" stroke="#a062a8" stroke-width="2"/><path d="M7.9 3.4 L9.5 5 L7.9 6.6 L6.3 5Z M12.3 3.4 L13.9 5 L12.3 6.6 L10.7 5Z" fill="#a062a8"/></svg>
<div class="bc" style="left:357px;letter-spacing:-0.25px">PWM.cpp</div>
<svg class="ic" style="left:417px;top:34px" width="8" height="12" viewBox="0 0 8 12"><path d="M1.5 1 L6.5 6 L1.5 11" fill="none" stroke="#a9a9a9" stroke-width="1.1"/></svg>
<svg class="ic" style="left:429px;top:33px" width="15" height="15" viewBox="0 0 15 15"><path d="M7.5 1 L13.5 4 V11 L7.5 14 L1.5 11 V4 Z M1.5 4 L7.5 7 L13.5 4 M7.5 7 V14" fill="none" stroke="#b180d7" stroke-width="1.1"/></svg>
<div class="bc" style="left:448px;letter-spacing:-0.85px">PWM_PID_SYNC()</div>
</div>
<div id="code"><div class="ln" style="top:56px">96</div><div class="cl" style="top:56px"><span class="o">    </span><span class="c">if</span><span class="o"> </span><span class="b2">(</span><span class="v">user_datas</span><span class="o">.</span><span class="v">fan_auto_flg</span><span class="o"> == </span><span class="n">0</span><span class="b2">)</span></div><div class="ln" style="top:75px">97</div><div class="cl" style="top:75px"><span class="o">        </span><span class="v">pwm</span><span class="o">.</span><span class="f">fan</span><span class="b2">(</span><span class="n">1</span><span class="b2">)</span><span class="o">;</span></div><div class="ln" style="top:94px">98</div><div class="cl" style="top:94px"><span class="b1">}</span></div><div class="ln" style="top:113px">99</div><div class="cl" style="top:113px"></div><div class="ln" style="top:132px">100</div><div class="cl" style="top:132px"><span class="m">/**</span></div><div class="ln" style="top:151px">101</div><div class="cl" style="top:151px"><span class="m"> * <span class="c14 g3"></span><span class="c14 g2"></span><span class="c14 g0"></span><span class="c14 g0"></span><span class="c14 g5"></span><span class="c14 g1"></span><span class="c14 g3"></span><span class="c14 g2"></span><span class="c14 g5"></span><span class="c14 g5"></span><span class="c14 g1"></span><span class="c14 g5"></span><span class="c14 g3"></span>PID<span class="c14 g2"></span><span class="c14 g5"></span><span class="c14 g1"></span><span class="c14 g4"></span><span class="c14 g6"></span><span class="c14 g5"></span><span class="c14 g2"></span><span class="c14 g1"></span>PWM<span class="c14 g1"></span><span class="c14 g0"></span><span class="c14 g3"></span><span class="c14 g4"></span><span class="c14 g7"></span></span></div><div class="ln" style="top:170px">102</div><div class="cl" style="top:170px"><span class="m"> * <span class="c14 g4"></span><span class="c14 g3"></span><span class="c14 g1"></span><span class="c14 g0"></span><span class="c14 g0"></span><span class="c14 g1"></span><span class="c14 g4"></span>PID<span class="c14 g2"></span><span class="c14 g5"></span><span class="c14 g3"></span><span class="c14 g4"></span><span class="c14 g6"></span><span class="c14 g5"></span><span class="c14 g5"></span><span class="c14 g3"></span><span class="c14 g2"></span><span class="c14 g5"></span><span class="c14 g1"></span><span class="c14 g1"></span><span class="c14 g2"></span><span class="c14 g1"></span><span class="c14 g5"></span><span class="c14 g2"></span><span class="c14 g1"></span><span class="c14 g5"></span><span class="c14 g4"></span><span class="c14 g2"></span><span class="c14 g1"></span><span class="c14 g1"></span><span class="c14 g5"></span><span class="c14 g0"></span><span class="c14 g3"></span><span class="c14 g2"></span><span class="c14 g5"></span><span class="c14 g7"></span></span></div><div class="ln" style="top:189px">103</div><div class="cl" style="top:189px"><span class="m"> */</span></div><div class="ln" style="top:208px">104</div><div class="cl" style="top:208px"><span class="k">void</span><span class="o"> </span><span class="t">PWM</span><span class="o">::</span><span class="f">temp_set</span><span class="b1">()</span></div><div class="ln" style="top:227px">105</div><div class="cl" style="top:227px"><span class="b1">{</span></div><div class="ln" style="top:246px">106</div><div class="cl" style="top:246px"><span class="o">    </span><span class="c">if</span><span class="o"> </span><span class="b2">(</span><span class="o">!</span><span class="v">pwm</span><span class="o">.</span><span class="v">power</span><span class="b2">)</span><span class="o"> </span><span class="m">// <span class="c14 g4"></span><span class="c14 g0"></span><span class="c14 g4"></span></span></div><div class="ln" style="top:265px">107</div><div class="cl" style="top:265px"><span class="o">    </span><span class="b2">{</span></div><div class="ln" style="top:284px">108</div><div class="cl" style="top:284px"><span class="o">        </span><span class="v">high_time</span><span class="o"> = </span><span class="n">0</span><span class="o">;</span><span class="o"> </span><span class="m">// <span class="c14 g5"></span><span class="c14 g5"></span><span class="c14 g0"></span><span class="c14 g3"></span><span class="c14 g4"></span></span></div><div class="ln" style="top:303px">109</div><div class="cl" style="top:303px"><span class="o">        </span><span class="c">return</span><span class="o">;</span></div><div class="ln" style="top:322px">110</div><div class="cl" style="top:322px"><span class="o">    </span><span class="b2">}</span></div><div class="ln" style="top:341px">111</div><div class="cl" style="top:341px"></div><div class="ln" style="top:360px">112</div><div class="cl" style="top:360px"><span class="o">    </span><span class="c">if</span><span class="o"> </span><span class="b2">(</span><span class="v">user_datas</span><span class="o">.</span><span class="v">pwm_temp_mode</span><span class="o"> == </span><span class="e">Co_Temp</span><span class="b2">)</span><span class="o"> </span><span class="m">// <span class="c14 g2"></span><span class="c14 g5"></span><span class="c14 g1"></span><span class="c14 g5"></span></span></div><div class="ln" style="top:379px">113</div><div class="cl" style="top:379px"><span class="o">    </span><span class="b2">{</span></div><div class="ln" style="top:398px">114</div><div class="cl" style="top:398px"><span class="o">        </span><span class="v">need_set_temp</span><span class="o"> = </span><span class="v">user_datas</span><span class="o">.</span><span class="v">pwm_temp_buf</span><span class="o">;</span><span class="o">                                  </span><span class="m">// <span class="c14 g2"></span><span class="c14 g5"></span><span class="c14 g2"></span><span class="c14 g5"></span><span class="c14 g2"></span></span></div><div class="ln" style="top:417px">115</div><div class="cl" style="top:417px"><span class="o">        </span><span class="c">if</span><span class="o"> </span><span class="b3">(</span><span class="v">adc</span><span class="o">.</span><span class="v">now_temp</span><span class="o"> &gt;= </span><span class="v">user_datas</span><span class="o">.</span><span class="v">pwm_temp_buf</span><span class="o"> &amp;&amp; </span><span class="v">temp_reached_flg</span><span class="o"> == </span><span class="k">false</span><span class="b3">)</span><span class="o"> </span><span class="m">// <span class="c14 g5"></span><span class="c14 g1"></span><span class="c14 g1"></span><span class="c14 g5"></span><span class="c14 g5"></span><span class="c14 g1"></span></span></div><div class="ln" style="top:436px">116</div><div class="cl" style="top:436px"><span class="o">        </span><span class="b3">{</span></div><div class="ln" style="top:455px">117</div><div class="cl" style="top:455px"><span class="o">            </span><span class="c">if</span><span class="o"> </span><span class="b1">(</span><span class="v">ui</span><span class="o">.</span><span class="v">temp_time_switch_flg</span><span class="o"> == </span><span class="k">false</span><span class="o"> &amp;&amp; </span><span class="v">user_datas</span><span class="o">.</span><span class="v">pwm_temp_mode1_time</span><span class="o"> != </span><span class="n">0</span><span class="b1">)</span><span class="o"> </span><span class="m">// <span class="c14 g2"></span><span class="c14 g4"></span><span class="c14 g4"></span><span class="c14 g0"></span><span class="c14 g1"></span><span class="c14 g4"></span><span class="c14 g0"></span><span class="c14 g2"></span></span></div><div class="ln" style="top:474px">118</div><div class="cl" style="top:474px"><span class="o">                </span><span class="v">ui</span><span class="o">.</span><span class="v">temp_time_switch_flg</span><span class="o"> = </span><span class="k">true</span><span class="o">;</span></div><div class="ln" style="top:493px">119</div><div class="cl" style="top:493px"><span class="o">        </span><span class="b3">}</span></div><div class="ln" style="top:512px">120</div><div class="cl" style="top:512px"><span class="o">        </span><span class="c">if</span><span class="o"> </span><span class="b3">(</span><span class="v">temp_reached_flg</span><span class="o"> == </span><span class="k">true</span><span class="o"> &amp;&amp; </span><span class="v">temp_time_buf</span><span class="o"> == </span><span class="n">0</span><span class="b3">)</span><span class="o"> </span><span class="m">// <span class="c14 g5"></span><span class="c14 g5"></span><span class="c14 g0"></span><span class="c14 g4"></span><span class="c14 g4"></span></span></div><div class="ln" style="top:531px">121</div><div class="cl" style="top:531px"><span class="o">        </span><span class="b3">{</span></div><div class="ln" style="top:550px">122</div><div class="cl" style="top:550px"><span class="o">            </span><span class="f">end</span><span class="b1">()</span><span class="o">;</span><span class="o"> </span><span class="m">// <span class="c14 g3"></span><span class="c14 g2"></span>pwm</span></div><div class="ln" style="top:569px">123</div><div class="cl" style="top:569px"><span class="o">            </span><span class="c">return</span><span class="o">;</span></div><div class="ln" style="top:588px">124</div><div class="cl" style="top:588px"><span class="o">        </span><span class="b3">}</span></div><div class="ln" style="top:607px">125</div><div class="cl" style="top:607px"><span class="o">    </span><span class="b2">}</span></div><div class="ln" style="top:626px">126</div><div class="cl" style="top:626px"><span class="o">    </span><span class="c">else</span></div><div class="ln" style="top:645px">127</div><div class="cl" style="top:645px"><span class="o">        </span><span class="v">need_set_temp</span><span class="o"> = </span><span class="v">backflow_temp_tmp</span><span class="o">;</span><span class="o"> </span><span class="m">// <span class="c14 g2"></span><span class="c14 g3"></span><span class="c14 g5"></span><span class="c14 g1"></span><span class="c14 g2"></span></span></div><div class="ln" style="top:664px">128</div><div class="cl" style="top:664px"></div><div class="ln" style="top:683px">129</div><div class="cl" style="top:683px"><span class="o">    </span><span class="m">////////////////////////////////////////////</span></div><div class="ln" style="top:702px">130</div><div class="cl" style="top:702px"></div><div class="ln" style="top:721px">131</div><div class="cl" style="top:721px"><span class="o">    </span><span class="v">ek</span><span class="b2">[</span><span class="n">2</span><span class="b2">]</span><span class="o"> = </span><span class="v">ek</span><span class="b2">[</span><span class="n">1</span><span class="b2">]</span><span class="o">;</span><span class="o"> </span><span class="m">// <span class="c14 g5"></span><span class="c14 g1"></span></span></div><div class="ln" style="top:740px">132</div><div class="cl" style="top:740px"><span class="o">    </span><span class="v">ek</span><span class="b2">[</span><span class="n">1</span><span class="b2">]</span><span class="o"> = </span><span class="v">ek</span><span class="b2">[</span><span class="n">0</span><span class="b2">]</span><span class="o">;</span></div><div class="ln" style="top:759px">133</div><div class="cl" style="top:759px"><span class="o">    </span><span class="v">ek</span><span class="b2">[</span><span class="n">0</span><span class="b2">]</span><span class="o"> = </span><span class="v">need_set_temp</span><span class="o"> - </span><span class="v">adc</span><span class="o">.</span><span class="v">now_temp</span><span class="o">;</span></div><div class="ln" style="top:778px">134</div><div class="cl" style="top:778px"></div><div class="ln" style="top:797px">135</div><div class="cl" style="top:797px"><span class="o">    </span><span class="c">if</span><span class="o"> </span><span class="b2">(</span><span class="v">user_datas</span><span class="o">.</span><span class="v">hardware_version</span><span class="o"> == </span><span class="n">0</span><span class="o"> &amp;&amp; </span><span class="v">adc</span><span class="o">.</span><span class="v">now_temp</span><span class="o"> == </span><span class="n">38</span><span class="b2">)</span></div><div class="ln" style="top:816px">136</div><div class="cl" style="top:816px"><span class="o">    </span><span class="b2">{</span></div><div class="ln" style="top:835px">137</div><div class="cl" style="top:835px"><span class="o">        </span><span class="v">pwm_buf</span><span class="o"> = </span><span class="v">need_set_temp</span><span class="o">;</span></div><div class="ln" style="top:854px">138</div><div class="cl" style="top:854px"><span class="o">    </span><span class="b2">}</span></div><div class="ln" style="top:873px">139</div><div class="cl" style="top:873px"><span class="o">    </span><span class="c">else</span></div><div class="ln" style="top:892px">140</div><div class="cl" style="top:892px"><span class="o">    </span><span class="b2">{</span></div><div class="ln" style="top:911px">141</div><div class="cl" style="top:911px"><span class="o">        </span><span class="v">pwm_buf_f</span><span class="o"> += </span><span class="v">ek</span><span class="b3">[</span><span class="n">0</span><span class="b3">]</span><span class="o">;</span></div><div class="ln" style="top:930px">142</div><div class="cl" style="top:930px"></div><div class="ln" style="top:949px">143</div><div class="cl" style="top:949px"><span class="o">        </span><span class="c">if</span><span class="o"> </span><span class="b3">(</span><span class="v">adc</span><span class="o">.</span><span class="v">now_temp</span><span class="o"> &lt; </span><span class="n">180</span><span class="b3">)</span></div><div class="ln" style="top:968px">144</div><div class="cl" style="top:968px"><span class="o">        </span><span class="b3">{</span></div><div class="ig" style="left:355px;top:56px;height:38px"></div><div class="ig" style="left:355px;top:151px;height:57px"></div><div class="ig" style="left:355px;top:246px;height:741px"></div><div class="ig" style="left:386px;top:75px;height:19px"></div><div class="ig" style="left:386px;top:284px;height:38px"></div><div class="ig" style="left:386px;top:398px;height:209px"></div><div class="ig" style="left:386px;top:645px;height:38px"></div><div class="ig" style="left:386px;top:835px;height:19px"></div><div class="ig" style="left:386px;top:911px;height:76px"></div><div class="ig" style="left:417px;top:455px;height:38px"></div><div class="ig" style="left:417px;top:550px;height:38px"></div><div class="ig" style="left:447px;top:474px;height:19px"></div></div>
<div id="sticky"><div class="ln" style="top:2px">82</div><div class="cl" style="top:2px"><span class="k">void</span><span class="o"> </span><span class="t">PWM</span><span class="o">::</span><span class="f">end</span><span class="b1">()</span></div></div>
<div id="panel"></div>
</body></html>
